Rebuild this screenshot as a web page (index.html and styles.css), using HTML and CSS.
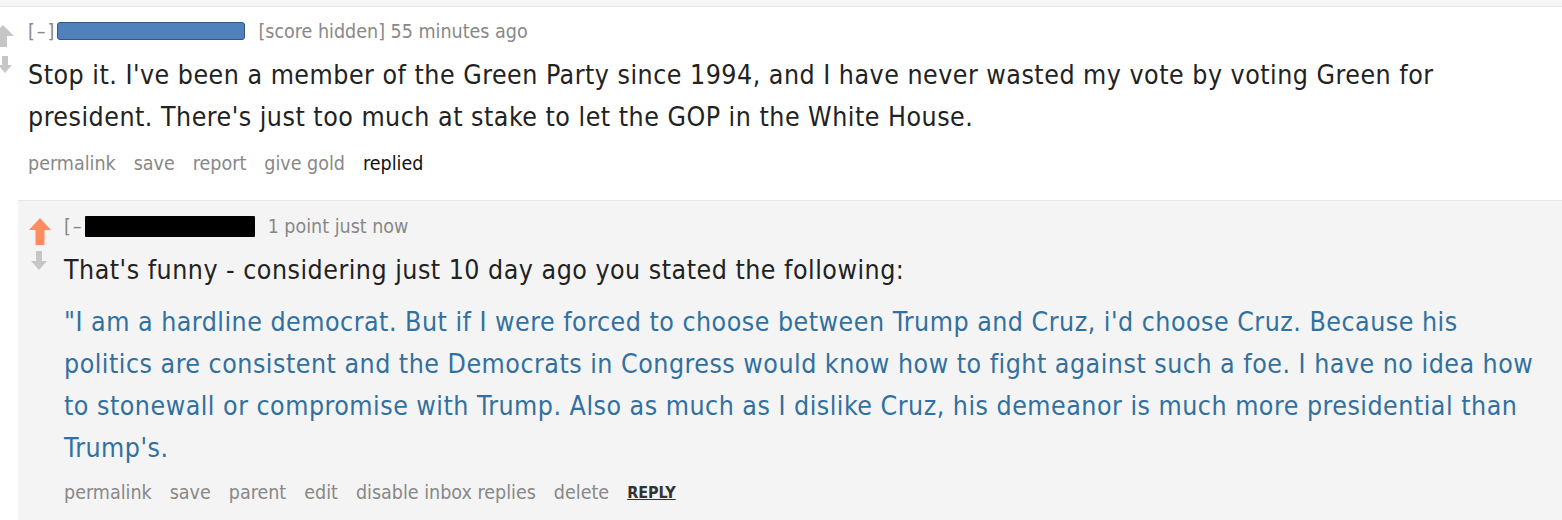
FILE: index.html
```html
<!DOCTYPE html>
<html>
<head>
<meta charset="utf-8">
<link rel="stylesheet" href="styles.css">
</head>
<body>
<div class="topbar"></div>
<div class="comment parent">
  <div class="arrows">
    <svg class="up" width="22" height="22" viewBox="0 0 22 22"><path d="M11 0 L22 11 L15 11 L15 22 L7 22 L7 11 L0 11 Z" fill="#c6c6c6"/></svg>
    <svg class="down" width="14" height="17" viewBox="0 0 14 17"><path d="M4 0 L10 0 L10 9 L14 9 L7 17 L0 9 L4 9 Z" fill="#c6c6c6"/></svg>
  </div>
  <div class="entry">
    <div class="tagline"><span class="expand">[–]</span><span class="redact blue"></span><span class="meta">[score hidden] 55 minutes ago</span></div>
    <div class="md">Stop it. I've been a member of the Green Party since 1994, and I have never wasted my vote by voting Green for president. There's just too much at stake to let the GOP in the White House.</div>
    <ul class="buttons"><li>permalink</li><li>save</li><li>report</li><li>give gold</li><li class="replied">replied</li></ul>
  </div>
</div>
<div class="child">
  <div class="comment">
    <div class="arrows">
      <svg class="up" width="22" height="27" viewBox="0 0 22 27"><path d="M11 0 L22 12 L15.5 12 L15.5 27 L6.5 27 L6.5 12 L0 12 Z" fill="#ff8b60"/></svg>
      <svg class="down" width="16" height="19" viewBox="0 0 16 19"><path d="M5 0 L11 0 L11 10 L16 10 L8 19 L0 10 L5 10 Z" fill="#c6c6c6"/></svg>
    </div>
    <div class="entry">
      <div class="tagline"><span class="expand">[–</span><span class="redact black"></span><span class="meta">1 point just now</span></div>
      <div class="md">That's funny - considering just 10 day ago you stated the following:</div>
      <div class="md quote">"I am a hardline democrat. But if I were forced to choose between Trump and Cruz, i'd choose Cruz. Because his politics are consistent and the Democrats in Congress would know how to fight against such a foe. I have no idea how to stonewall or compromise with Trump. Also as much as I dislike Cruz, his demeanor is much more presidential than Trump's.</div>
      <ul class="buttons"><li>permalink</li><li>save</li><li>parent</li><li>edit</li><li>disable inbox replies</li><li>delete</li><li class="reply">REPLY</li></ul>
    </div>
  </div>
</div>
</body>
</html>
```

FILE: styles.css
```css
html, body {
  margin: 0;
  padding: 0;
  background: #ffffff;
  font-family: "DejaVu Sans Condensed", "DejaVu Sans", Verdana, sans-serif;
  font-stretch: condensed;
  height: 520px;
  overflow: hidden;
}
.topbar {
  height: 6px;
  background: #f6f6f6;
  border-bottom: 1px solid #e6e6e6;
}
.comment {
  display: flex;
}
.parent .arrows {
  width: 28px;
  padding-top: 18px;
  display: flex;
  flex-direction: column;
  align-items: flex-start;
  gap: 9px;
}
.parent .arrows .up { margin-left: -8px; }
.parent .arrows .down { margin-left: -2px; }
.entry {
  flex: 1;
}
.tagline {
  display: flex;
  align-items: center;
  height: 24px;
  font-size: 19.5px;
  color: #888888;
}
.parent .tagline { margin-top: 12px; }
.expand {
  color: #888888;
  letter-spacing: 2px;
}
.redact {
  display: inline-block;
  border-radius: 3px;
}
.redact.blue {
  width: 186px;
  height: 16px;
  margin-left: 1px;
  background: #4f81bd;
  border: 1px solid #2f5785;
}
.redact.black {
  width: 170px;
  height: 21px;
  margin-left: 1px;
  background: #000000;
  border-radius: 1px;
}
.meta { margin-left: 13px; }
.md {
  font-size: 26.5px;
  letter-spacing: 0.5px;
  line-height: 42px;
  color: #222222;
  margin-top: 11px;
  padding-right: 28px;
}
.buttons {
  list-style: none;
  margin: 14px 0 0 0;
  padding: 0;
  display: flex;
  gap: 18px;
  font-size: 19.5px;
  line-height: 24px;
  color: #888888;
}
.buttons .replied { color: #111111; }
.buttons .reply {
  color: #333333;
  font-weight: bold;
  text-decoration: underline;
  font-size: 16px;
}
.child {
  margin-top: 24px;
  margin-left: 18px;
  background: #f4f4f4;
  border-top: 1px solid #e8e8e8;
  padding-top: 13px;
  height: 320px;
}
.child .arrows {
  width: 46px;
  padding-top: 4px;
  display: flex;
  flex-direction: column;
  align-items: center;
  gap: 6px;
}
.child .arrows .up { margin-right: 3px; }
.child .arrows .down { margin-right: 4px; }
.child .quote {
  color: #31709f;
  margin-top: 10px;
}
.child .buttons { margin-top: 12px; }
```
